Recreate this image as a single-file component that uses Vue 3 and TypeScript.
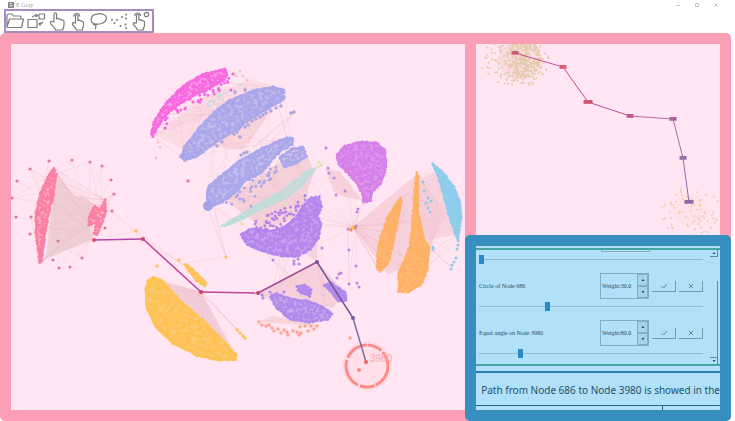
<script setup lang="ts">
import { ref } from 'vue'

type Pt = [number, number]
interface Cluster {
  color: string
  shape: Pt[]
  step: number
  keep: number
  size: number
  fill?: number
}

let seed = 7
const rnd = () => {
  seed = (seed * 16807) % 2147483647
  return seed / 2147483647
}

const inside = (x: number, y: number, p: Pt[]) => {
  let hit = false
  for (let i = 0, j = p.length - 1; i < p.length; j = i++) {
    const [xi, yi] = p[i]
    const [xj, yj] = p[j]
    if (yi > y !== yj > y && x < ((xj - xi) * (y - yi)) / (yj - yi) + xi) hit = !hit
  }
  return hit
}

const dots = (pts: Pt[]) => pts.map(([x, y]) => `M${x.toFixed(1)} ${y.toFixed(1)}h0`).join('')
const poly = (pts: Pt[]) => pts.map((p) => p.join(',')).join(' ')

const scatter = (shape: Pt[], step: number, keep: number): Pt[] => {
  const xs = shape.map((p) => p[0])
  const ys = shape.map((p) => p[1])
  const out: Pt[] = []
  for (let y = Math.min(...ys); y <= Math.max(...ys); y += step)
    for (let x = Math.min(...xs); x <= Math.max(...xs); x += step) {
      const px = x + (rnd() - 0.5) * step * 1.8
      const py = y + (rnd() - 0.5) * step * 1.8
      if (rnd() < keep && inside(px, py, shape)) out.push([px, py])
    }
  return out
}

const outline = (shape: Pt[]): Pt[] => {
  const out: Pt[] = []
  shape.forEach(([x, y], i) => {
    const [nx, ny] = shape[(i + 1) % shape.length]
    const n = Math.max(1, Math.round(Math.hypot(nx - x, ny - y) / 2.6))
    for (let k = 0; k < n; k++)
      out.push([x + ((nx - x) * k) / n + rnd() - 0.5, y + ((ny - y) * k) / n + rnd() - 0.5])
  })
  return out
}

const fan = (from: Pt[], to: Pt[], count: number) => {
  let d = ''
  for (let i = 0; i < count; i++) {
    const a = from[Math.floor(rnd() * from.length)]
    const b = to[Math.floor(rnd() * to.length)]
    d += `M${a[0]} ${a[1]}L${b[0]} ${b[1]}`
  }
  return d
}

const rose: Pt[] = [[54,168],[56,174],[53,197],[50,207],[46,227],[41,262],[40,262],[36,233],[36,213],[41,193],[48,177]]
const roseSmall: Pt[] = [[105,200],[106,211],[97,235],[94,233],[97,222],[89,225],[89,217],[95,206],[100,211]]
const magenta: Pt[] = [[151,134],[155,120],[167,102],[183,86],[203,74],[225,69],[227,75],[220,82],[206,89],[192,96],[177,105],[167,114],[158,126],[153,136]]
const blueTop: Pt[] = [[181,157],[185,147],[197,131],[217,110],[230,101],[253,91],[273,87],[284,90],[284,99],[270,107],[253,117],[237,129],[217,141],[197,156],[185,160]]
const blueMid: Pt[] = [[207,198],[208,188],[223,174],[240,161],[263,148],[287,138],[293,139],[292,144],[280,151],[269,163],[262,172],[245,181],[235,192],[222,202],[211,206]]
const purple: Pt[] = [[241,235],[250,229],[262,230],[272,231],[287,226],[298,216],[303,206],[311,198],[319,197],[321,207],[317,217],[321,224],[318,238],[310,249],[298,256],[283,256],[263,251],[247,244]]
const purpleLow: Pt[] = [[271,297],[277,294],[290,299],[307,301],[323,307],[332,314],[328,319],[310,322],[290,319],[277,308]]
const orchid: Pt[] = [[337,155],[345,146],[360,142],[377,143],[385,150],[386,167],[381,183],[372,192],[371,200],[364,202],[362,193],[357,183],[348,173],[339,164]]
const orangeA: Pt[] = [[400,198],[401,203],[395,233],[388,263],[380,271],[377,267],[379,243],[388,217]]
const orangeB: Pt[] = [[417,173],[418,176],[418,213],[424,240],[429,247],[427,270],[421,284],[407,292],[399,291],[399,273],[410,247],[413,220],[415,190]]
const sky: Pt[] = [[433,164],[443,173],[454,187],[460,203],[461,217],[458,241],[456,235],[448,213],[444,197],[437,173]]
const amber: Pt[] = [[153,278],[162,281],[180,301],[203,321],[220,338],[236,355],[235,359],[220,360],[197,355],[173,343],[156,327],[147,307],[146,290],[148,281]]

const clusters: Cluster[] = [
  { color: '#bddcda', shape: [[222,226],[232,220],[262,202],[283,191],[308,171],[315,169],[300,187],[285,198],[262,208],[240,220]], step: 2.8, keep: 0.8, size: 3, fill: 0.6 },
  { color: '#c9dcdb', shape: [[204,104],[212,96],[228,92],[240,84],[238,92],[222,102],[208,107]], step: 3, keep: 0.6, size: 2.6 },
  { color: '#fb7fa2', shape: rose, step: 2.3, keep: 0.9, size: 3, fill: 0.6 },
  { color: '#fb7fa2', shape: roseSmall, step: 2.3, keep: 0.95, size: 3, fill: 0.3 },
  { color: '#f868e0', shape: magenta, step: 2.3, keep: 0.9, size: 3, fill: 0.6 },
  { color: '#f868e0', shape: [[158,126],[177,104],[206,88],[228,70],[232,84],[212,97],[196,104],[176,114],[163,128]], step: 3.4, keep: 0.6, size: 3 },
  { color: '#aaa8ea', shape: blueTop, step: 2.6, keep: 0.8, size: 3.4, fill: 0.7 },
  { color: '#aaa8ea', shape: blueMid, step: 2.6, keep: 0.8, size: 3.4, fill: 0.7 },
  { color: '#aaa8ea', shape: [[280,157],[293,149],[303,147],[306,156],[297,163],[284,166]], step: 2.6, keep: 0.95, size: 3.2, fill: 0.5 },
  { color: '#aaa8ea', shape: [[222,202],[245,180],[268,161],[290,163],[278,174],[262,188],[252,206],[232,206]], step: 4, keep: 0.55, size: 3 },
  { color: '#b487ed', shape: purple, step: 2.6, keep: 0.85, size: 3.2, fill: 0.75 },
  { color: '#b487ed', shape: [[255,222],[270,211],[290,206],[306,194],[306,212],[290,230],[272,236],[255,232]], step: 3.4, keep: 0.7, size: 3 },
  { color: '#b08bec', shape: purpleLow, step: 2.6, keep: 0.9, size: 3.2, fill: 0.7 },
  { color: '#b08bec', shape: [[297,287],[305,285],[311,290],[310,296],[300,292]], step: 2.4, keep: 1, size: 3.2, fill: 1 },
  { color: '#b08bec', shape: [[325,285],[331,283],[345,293],[346,300],[339,301]], step: 2.4, keep: 1, size: 3.6, fill: 1 },
  { color: '#d67fe9', shape: orchid, step: 2.5, keep: 0.9, size: 3, fill: 0.8 },
  { color: '#ffb265', shape: orangeA, step: 2.5, keep: 0.9, size: 3.2, fill: 0.85 },
  { color: '#ffb265', shape: orangeB, step: 2.5, keep: 0.9, size: 3.2, fill: 0.85 },
  { color: '#8ccdec', shape: sky, step: 2.5, keep: 0.9, size: 2.8, fill: 0.95 },
  { color: '#ffc255', shape: amber, step: 2.8, keep: 0.85, size: 3.6, fill: 0.8 },
  { color: '#ffc255', shape: [[185,265],[189,266],[206,283],[205,286],[196,280]], step: 2.4, keep: 0.9, size: 3, fill: 0.6 },
]
const clusterArt = clusters.map((c) => ({
  ...c,
  points: poly(c.shape),
  d: dots([...scatter(c.shape, c.step, c.keep), ...(c.fill ? outline(c.shape) : [])]),
}))

const roseRing: Pt[] = [[49,161],[72,160],[90,162],[102,166],[111,180],[114,194],[112,211],[105,228],[82,258],[70,267],[59,268],[53,260],[58,241],[30,234],[31,217],[16,217],[12,198],[17,181],[30,169]]
const strays = [
  { color: '#dc7c9c', size: 3.2, d: dots(roseRing) },
  { color: '#e97fa0', size: 3.4, d: dots([[188,181]]) },
  { color: '#e866c8', size: 3.2, d: dots([[233,74],[231,90],[165,128],[178,112],[193,102]]) },
  { color: '#f6c3cb', size: 3, d: dots([[240,71],[243,76],[247,80],[245,88],[158,142],[156,158],[160,147],[236,76]]) },
  { color: '#a8a5e2', size: 3.4, d: dots([[217,146],[222,142],[234,134],[237,132],[239,129],[245,127],[248,125],[252,121],[256,119],[260,117],[263,115],[266,113],[271,111],[276,108],[281,106],[240,137],[291,113],[294,112],[241,155],[244,153],[247,152],[235,92],[245,90]]) },
  { color: '#a4a2ea', size: 10, d: dots([[208,206]]) },
  { color: '#c086dd', size: 3, d: dots([[326,148],[328,168],[329,173],[334,178],[336,195],[345,191],[358,209],[357,212],[348,229],[356,226],[349,250],[322,248],[273,260],[356,266],[349,284],[357,283],[359,287],[341,273],[339,274],[337,278]]) },
  { color: '#b08bec', size: 3.2, d: dots([[262,295],[263,298],[270,292],[272,295],[284,292],[294,261],[299,264],[298,259],[294,264]]) },
  { color: '#ffa394', size: 3.4, d: dots([[259,322],[262,325],[266,326],[269,325],[272,328],[274,331],[278,329],[281,333],[284,330],[287,332],[288,335],[293,331],[297,332],[301,333],[300,327],[305,326],[308,331],[311,326],[314,329],[317,326],[299,335],[350,338]]) },
  { color: '#ffc255', size: 3.4, d: dots([[179,260],[157,266],[226,257],[136,231],[237,330],[240,333],[243,336],[245,338],[353,227],[351,229]]) },
  { color: '#f1805e', size: 3, d: dots([[351,230],[355,228],[143,239]]) },
  { color: '#8ccdec', size: 3, d: dots([[423,182],[424,191],[426,203],[428,198],[431,201],[428,208],[430,212],[458,245],[457,249],[456,258],[454,262],[452,265],[451,269],[433,247],[433,249]]) },
  { color: '#dbe6ad', size: 3.2, d: dots([[242,224],[285,205],[319,162],[321,165],[318,167]]) },
]

const fills = [
  { c: '#ecccd4', o: 0.85, p: '56,172 74,195 98,206 90,230 92,240 46,258 52,205' },
  { c: '#f9cfd7', o: 0.5, p: '155,135 205,96 250,80 275,88 220,112 185,150' },
  { c: '#f7cdd5', o: 0.75, p: '210,145 262,112 274,108 243,150 225,148' },
  { c: '#f1c8d0', o: 0.7, p: '225,200 275,165 305,150 314,172 300,215 265,230' },
  { c: '#f4c6d1', o: 0.6, p: '353,227 417,174 448,213 425,255 388,275' },
  { c: '#f5cad5', o: 0.6, p: '418,180 436,172 456,235 424,240' },
  { c: '#eec4d0', o: 0.75, p: '156,280 201,292 232,350 205,322 175,298' },
  { c: '#f0c2cb', o: 0.6, p: '258,293 317,262 345,292 333,308 290,300' },
  { c: '#f0c2cb', o: 0.5, p: '317,262 300,250 318,222' },
  { c: '#f3c5cf', o: 0.65, p: '325,168 340,172 362,200 345,197 334,192' },
  { c: '#f8c4c4', o: 0.55, p: '258,322 318,326 295,320 272,316' },
]

const hub: Pt[] = [[353,227]]
const webs = [
  fan(roseRing, roseSmall, 26), fan(roseRing, rose, 20), fan(rose, roseSmall, 60),
  fan(magenta, blueTop, 34), fan(blueTop, blueMid, 18), fan([[294,112]], blueMid, 6),
  fan(hub, orangeA, 14), fan(hub, orangeB, 16), fan(orangeA, orangeB, 20), fan(orangeB, sky, 24),
  fan(hub, purple, 7), fan(hub, orchid, 6), fan(hub, blueMid, 4), fan(hub, sky, 4),
  fan([[201,292]], amber, 16), fan([[226,257]], [[208,208],[187,263],[214,208]], 5),
  fan([[143,239],[136,231]], [[157,266],[112,211],[94,240],[185,266]], 8),
  fan([[245,338],[237,330]], [[201,292],[210,300]], 6),
  fan([[258,293],[317,262]], purpleLow, 16), fan([[349,284],[356,266]], [[357,214],[348,229]], 4),
  fan(purple, purpleLow, 12), fan(purple, blueMid, 22), fan([[452,268]], [[420,240],[430,247]], 4),
].join('')

const route: Pt[] = [[94,240],[143,239],[201,292],[258,293],[317,262],[353,318],[366,362]]
const routeColors = ['#b549a8', '#c03fa0', '#bd4596', '#9b4f95', '#7a5597', '#75729f']
const segments = route.slice(1).map(([x2, y2], i) => ({ x1: route[i][0], y1: route[i][1], x2, y2, c: routeColors[i] }))
const nodeColors = ['#e5476a', '#d9465c', '#d2405e', '#c24468', '#82509a', '#6f5f9b', '#ee5f66']

const halo = (cx: number, cy: number, rx: number, ry: number, n: number, power: number): Pt[] =>
  Array.from({ length: n }, () => {
    const a = rnd() * Math.PI * 2
    const r = Math.pow(rnd(), power)
    return [cx + Math.cos(a) * rx * r, cy + Math.sin(a) * ry * r]
  })
const cloudTop = dots([...halo(515, 62, 34, 27, 160, 0.6), ...halo(524, 59, 16, 21, 220, 0.6)])
const cloudLow = dots(halo(691, 212, 31, 26, 75, 0.5))

const detail = [
  { x: 515, y: 53, t: '686', w: 7, c: '#f0788c' },
  { x: 563, y: 67, t: '415', w: 7, c: '#f0788c' },
  { x: 588, y: 102, t: '1036', w: 9, c: '#e66a86' },
  { x: 630, y: 116, t: '762', w: 7, c: '#d072a2' },
  { x: 673, y: 119, t: '208', w: 7, c: '#b97fb6' },
  { x: 683, y: 158, t: '219', w: 7, c: '#a387c2' },
  { x: 689, y: 202, t: '3980', w: 9, c: '#9c86c4' },
]
const detailSegs = detail.slice(1).map((n, i) => ({ a: detail[i], b: n, c: ['#cf4a94', '#c5479a', '#c04b98', '#b9699f', '#9d6da5', '#8d6fae'][i] }))

const first = ref(0)
const rows = ref([
  { id: 'circle', label: 'Circle of Node 686', weight: 'Weight:30.0', value: 30 },
  { id: 'angle', label: 'Equal angle on Node 3980', weight: 'Weight:80.0', value: 18 },
])
const outlineHand = 'M6 11V3.2C6 1.4 8.6 1.4 8.6 3.2V8C9 7 11 7.200 11.200 8.500C12 7.600 13.700 8 13.800 9.300C14.800 8.700 16 9.300 16 10.600V14C16 16 15 17 14.800 19H7.600C7 16.500 4.500 15 2.600 12.600C1.500 11 3.200 9.600 4.500 10.800Z'
</script>

<template>
  <div class="app">
    <header class="titlebar">
      <svg class="logo" viewBox="0 0 7 7"><rect width="7" height="7" rx="1" fill="#858585" /><path d="M1.500 2h3M2 4.500h3.500" stroke="#fff" /></svg>
      <span class="title">E Gray</span>
      <nav class="window-controls">
        <button aria-label="Minimize"><svg viewBox="0 0 6 6"><path d="M1 3.500h4" /></svg></button>
        <button aria-label="Maximize"><svg viewBox="0 0 6 6"><path d="M1.500 1.500h3v3h-3z" /></svg></button>
        <button aria-label="Close"><svg viewBox="0 0 6 6"><path d="M1.500 1.500l3 3M4.500 1.500l-3 3" /></svg></button>
      </nav>
    </header>

    <div class="toolbar">
      <button aria-label="Open"><svg viewBox="0 0 19 20"><path d="M1 16V4.500C1 3.500 1.500 3 2.500 3H6l1.500 2H14q1 0 1 1v2M1 16L3.500 8H17.500L15.500 16.500H1.500Z" /></svg></button>
      <button aria-label="Swap"><svg viewBox="0 0 19 20"><path d="M1 8.500h9v8h-9zM12 3h5.500v5h-5.500zM5.500 6.500q0-2 4-2M8.500 3l2 1.500L8.500 6M15.500 10.500q0 2.500-3 2.500M13.500 11.500L12 13l1.500 1.500" /></svg></button>
      <button aria-label="Select"><svg viewBox="0 0 19 20"><path :d="outlineHand" /></svg></button>
      <button aria-label="Tap"><svg viewBox="0 0 19 20"><path d="M6.500 12V4.500q1.200-1.500 2.400 0V9.500q1.600-.8 2 .4 1.400-.6 1.900.6 1.400-.3 1.700 1V14q0 2-1 3v2H7.500q-1-2.500-3.800-5-1-2 1-2.300zM4.700 5.500A3 3 0 1 1 10.700 5.500" /></svg></button>
      <button aria-label="Lasso"><svg viewBox="0 0 19 20"><path d="M5 13C-.5 11.500-.2 5 6 3.200C12 1.500 17 4 16.300 7.800C15.500 12 10 13.700 5 13M5 13q-2-1.500-1.500.5 2 1.300 3.500 0M5.500 14q1 2-.5 4.500" /></svg></button>
      <button aria-label="Points"><svg viewBox="0 0 19 20"><path class="points" d="M1 9h0M6 9h0M3.500 12h0M11 6h0M15 3.500h0M15 7.500h0M9.500 15h0M14.500 13.500h0M15 17h0" /></svg></button>
      <button aria-label="Tap node"><svg viewBox="0 0 19 20"><path d="M4.500 12V4q1.200-1.500 2.400 0V9q1.600-.8 2 .4 1.400-.6 1.900.6 1.400-.3 1.700 1V14q0 2-1 3v2H5.500q-1-2.500-3.800-5-1-2 1-2.300zM2.700 5A3 3 0 1 1 8.700 5" /><circle cx="14.500" cy="3.500" r="2.200" /></svg></button>
    </div>

    <main class="board">
      <section class="graph">
        <svg viewBox="11 44 454 366">
          <polygon v-for="f in fills" :key="f.p" :points="f.p" :fill="f.c" :opacity="f.o" />
          <path class="web" :d="webs" />
          <g v-for="(c, i) in clusterArt" :key="i">
            <polygon v-if="c.fill" :points="c.points" :fill="c.color" :opacity="c.fill" />
            <path class="dots" :d="c.d" :stroke="c.color" :stroke-width="c.size" />
          </g>
          <path v-for="s in strays" :key="s.d" class="dots" :d="s.d" :stroke="s.color" :stroke-width="s.size" />
          <circle class="halo" cx="367" cy="366" r="24" />
          <circle class="ring" cx="367" cy="366" r="21" />
          <text class="ring-label" x="370" y="362">3980</text>
          <line v-for="s in segments" :key="s.x1" :x1="s.x1" :y1="s.y1" :x2="s.x2" :y2="s.y2" :stroke="s.c" stroke-width="1.500" />
          <circle v-for="(p, i) in route" :key="i" :cx="p[0]" :cy="p[1]" r="2" :fill="nodeColors[i]" />
          <circle cx="359" cy="370" r="2" fill="#fc8585" />
        </svg>
      </section>

      <div class="side">
        <section class="path-view">
          <svg viewBox="476 44 244 191">
            <ellipse cx="520" cy="60" rx="22" ry="19" fill="#fac8c8" opacity=".4" />
            <ellipse cx="690" cy="210" rx="18" ry="16" fill="#ffdcdc" opacity=".4" />
            <path class="dots" :d="cloudTop" stroke="#e2ccab" stroke-width="2.200" />
            <path class="dots" :d="cloudLow" stroke="#f4c9ac" stroke-width="2" />
            <line v-for="s in detailSegs" :key="s.a.t" :x1="s.a.x" :y1="s.a.y" :x2="s.b.x" :y2="s.b.y" :stroke="s.c" />
            <g v-for="n in detail" :key="n.t">
              <rect :x="n.x - n.w / 2" :y="n.y - 2" :width="n.w" height="4" :fill="n.c" />
              <text class="node-label" :x="n.x" :y="n.y + 1">{{ n.t }}</text>
            </g>
          </svg>
        </section>

        <section class="inspector">
          <div class="constraints">
            <div class="list">
              <div class="peek"></div>
              <input v-model.number="first" class="slider" type="range" min="0" max="100" aria-label="Previous weight" />
              <template v-for="r in rows" :key="r.id">
                <div class="row">
                  <label :for="r.id">{{ r.label }}</label>
                  <div class="spin">
                    <input v-model="r.weight" type="text" :aria-label="r.label + ' weight'" />
                    <div class="steps">
                      <button aria-label="Increase"><svg viewBox="0 0 4 4"><path d="M.5 3L2 1l1.500 2z" /></svg></button>
                      <button aria-label="Decrease"><svg viewBox="0 0 4 4"><path d="M.5 1L2 3l1.500-2z" /></svg></button>
                    </div>
                  </div>
                  <button class="act" aria-label="Apply"><svg viewBox="0 0 8 6"><path d="M1.500 3l2 2L7 1" /></svg></button>
                  <button class="act" aria-label="Remove"><svg viewBox="0 0 8 6"><path d="M2 1l4 4M6 1L2 5" /></svg></button>
                </div>
                <input :id="r.id" v-model.number="r.value" class="slider" type="range" min="0" max="100" />
              </template>
            </div>
            <div class="scroll">
              <button aria-label="Scroll up"><svg viewBox="0 0 4 4"><path d="M.5 3L2 1l1.500 2z" /></svg></button>
              <div class="thumb"></div>
              <button aria-label="Scroll down"><svg viewBox="0 0 4 4"><path d="M.5 1L2 3l1.500-2z" /></svg></button>
            </div>
          </div>
          <p class="message"><span>Path from Node 686 to Node 3980 is showed in the</span></p>
          <div class="footer"><span></span><span></span></div>
        </section>
      </div>
    </main>
  </div>
</template>

<style>
body {
  margin: 0;
  background: #fff;
}
</style>

<style scoped>
.app {
  display: flex;
  flex-direction: column;
  min-height: 100vh;
  padding-right: 4px;
  box-sizing: border-box;
  font-family: 'Liberation Serif', serif;
}
button {
  display: flex;
  align-items: center;
  justify-content: center;
  margin: 0;
  padding: 0;
  border: 0;
  background: none;
}
.titlebar {
  display: flex;
  align-items: center;
  gap: 2px;
  height: 9px;
  padding-left: 8px;
}
.logo {
  width: 6px;
  height: 6px;
}
.title {
  font-size: 6px;
  line-height: 8px;
  color: #999;
}
.window-controls {
  display: flex;
  gap: 13px;
  margin-left: auto;
  padding-right: 12px;
}
.window-controls svg {
  display: block;
  width: 6px;
  height: 6px;
  fill: none;
  stroke: #b5b5b5;
  stroke-width: 0.8;
}
.toolbar {
  display: flex;
  align-self: flex-start;
  align-items: center;
  gap: 2px;
  height: 24px;
  margin-left: 4px;
  padding-right: 1px;
  box-sizing: border-box;
  border: 2px solid #a98bc2;
}
.toolbar svg {
  display: block;
  width: 19px;
  height: 20px;
  fill: none;
  stroke: #7c7c7c;
  stroke-width: 1.2;
  stroke-linejoin: round;
}
.toolbar .points {
  stroke-width: 2;
  stroke-linecap: round;
}
.board {
  flex: 1;
  display: grid;
  grid-template-columns: 465fr 266fr;
  border-radius: 5px;
  background: #fb9fb6;
}
.graph {
  min-width: 0;
  margin: 11px 0 11px 11px;
  background: #ffe6f2;
}
.graph svg,
.path-view svg {
  display: block;
  width: 100%;
  height: 100%;
}
.web {
  fill: none;
  stroke: #f0bfca;
  stroke-width: 0.5;
  opacity: 0.5;
}
.dots {
  fill: none;
  stroke-linecap: round;
}
.halo {
  fill: none;
  stroke: #ffd5dd;
  stroke-width: 1;
}
.ring {
  fill: #ffdfea;
  stroke: #fc8c88;
  stroke-width: 3;
  stroke-dasharray: 24 1 15 2 30 2;
}
.ring-label {
  font: 10px 'Liberation Sans', sans-serif;
  fill: #fba9a9;
}
.node-label {
  font: 4px 'Liberation Sans', sans-serif;
  text-anchor: middle;
  fill: #8a2a58;
}
.side {
  display: flex;
  flex-direction: column;
  min-width: 0;
}
.path-view {
  flex: 1;
  min-height: 0;
  margin: 11px 11px 0;
  background: #ffe6f2;
}
.inspector {
  display: flex;
  flex-direction: column;
  border: 11px solid #378fc0;
  border-radius: 5px;
  background: #b1e0f9;
}
.constraints {
  display: flex;
  justify-content: space-between;
  margin-top: 2px;
  border-top: 2px solid #46a69f;
  border-bottom: 2px solid #46a69f;
}
.list {
  flex: 1;
  padding: 0 7px 6px 3px;
}
.peek {
  width: 47px;
  height: 1px;
  margin: 0 0 2px 122px;
  border: solid #85adc1;
  border-width: 0 1px 1px;
}
.slider {
  display: block;
  appearance: none;
  width: 100%;
  height: 10px;
  margin: 0;
  background: linear-gradient(#93bdd1, #93bdd1) center / 100% 1px no-repeat;
}
.slider::-webkit-slider-thumb {
  appearance: none;
  width: 5px;
  height: 9px;
  background: #2c8bc6;
}
.row {
  display: flex;
  align-items: center;
  gap: 3px;
  padding: 9px 0 2px;
}
.row label {
  flex: 1;
  font-size: 6px;
  line-height: 8px;
  white-space: nowrap;
  color: #2c4d60;
}
.spin {
  display: flex;
  width: 49px;
  height: 26px;
  box-sizing: border-box;
  border: 1px solid #85adc1;
}
.spin input {
  flex: 1;
  min-width: 0;
  padding: 0 0 0 1px;
  border: 0;
  outline: 0;
  background: none;
  font: 6px 'Liberation Serif', serif;
  color: #2c4d60;
}
.steps {
  display: flex;
  flex-direction: column;
  width: 11px;
}
.steps button {
  flex: 1;
  border: 1px solid #85adc1;
  background: #a4d3ec;
}
.steps svg,
.scroll svg {
  width: 4px;
  height: 4px;
  fill: #25495c;
}
.act {
  width: 24px;
  height: 11px;
  border: solid #6d9cb5;
  border-width: 0 1px 1px 0;
}
.act svg {
  width: 8px;
  height: 6px;
  fill: none;
  stroke: #5c8ca6;
}
.scroll {
  display: flex;
  flex-direction: column;
  width: 8px;
  margin-right: 2px;
}
.scroll button {
  height: 7px;
  border: solid #5a8ba5;
  border-width: 0 1px 1px 0;
}
.scroll button:last-child {
  border-width: 1px 1px 0 0;
}
.thumb {
  flex: 1;
  margin-top: 24px;
  border-right: 1px solid #5a8ba5;
}
.message {
  display: flex;
  justify-content: flex-end;
  height: 32px;
  margin: 5px 0 0;
  overflow: hidden;
  border-top: 2px solid #2c7fb0;
  font: 10px/34px 'Noto Sans', sans-serif;
  white-space: nowrap;
  color: #23506b;
}
.footer {
  display: grid;
  grid-template-columns: 186fr 58fr;
  height: 4px;
  border-top: 1px solid #2c6483;
}
.footer span + span {
  border-left: 1px solid #2c6483;
}
</style>
